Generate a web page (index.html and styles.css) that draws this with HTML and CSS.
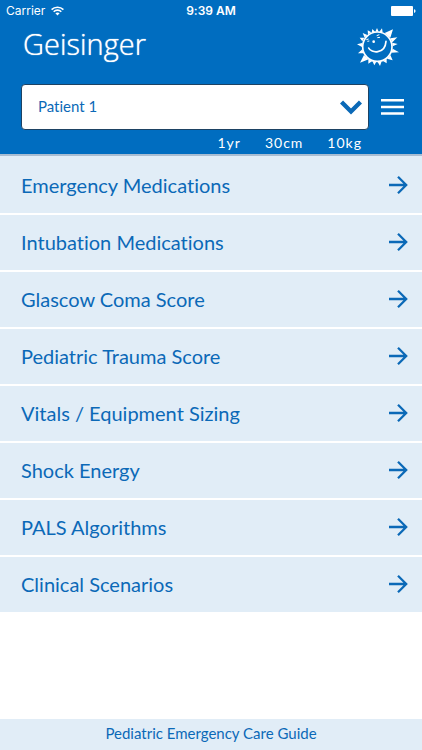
FILE: index.html
```
<!DOCTYPE html>
<html lang="en">
  <head>
    <meta charset="UTF-8" />
    <meta name="viewport" content="width=device-width, initial-scale=1.0" />
    <title>Pediatric Emergency Care Guide</title>
    <link rel="stylesheet" href="styles.css">
  </head>
  <body>
    <header class="header">
      <div class="status">
        <div class="carrier">
          Carrier
          <svg width="13" height="10" viewBox="0 0 13 10" fill="none" stroke="#fff" stroke-width="1.6">
            <path d="M0.6 3.6C3.8 0.4 9.2 0.4 12.4 3.6" />
            <path d="M2.7 5.7C4.8 3.6 8.2 3.6 10.3 5.7" />
            <path d="M4.4 7.3C5.6 6.2 7.4 6.2 8.6 7.3L6.5 9.4Z" fill="#fff" stroke="none" />
          </svg>
        </div>
        <div class="time">9:39 AM</div>
        <div class="battery">
          <svg width="25" height="10" viewBox="0 0 25 10" fill="#fff">
            <rect width="22" height="10" rx="1" />
            <path d="M23 3.2C25 3.2 25 6.8 23 6.8Z" />
          </svg>
        </div>
      </div>
      <div class="brand">
        <div class="logo">Geisinger</div>
        <svg class="sun" width="42" height="38" viewBox="438 83 126 114" fill="#fff">
          <path d="M461 112L455 98L469 104ZM471 102L470 90L481 96ZM482 97L484 86L492 94ZM493 94L498 83L503 94ZM505 94L513 84L515 96ZM521 98L546 87L538 112ZM538 114L559 111L544 126ZM544 127L560 131L545 138ZM545 145L564 156L541 157ZM538 164L545 180L528 175ZM527 176L527 189L516 182ZM512 183L507 197L500 185ZM496 184L490 195L484 182ZM484 182L472 190L472 177ZM473 177L447 187L459 164ZM458 159L441 159L454 147ZM453 140L438 132L453 128ZM454 123L446 112L460 112Z" />
          <ellipse cx="499" cy="139" rx="44" ry="44" fill="none" stroke="#fff" stroke-width="5" />
          <path d="M473 143C480 159 522 163 525 123" fill="none" stroke="#fff" stroke-width="5" stroke-linecap="round" />
          <circle cx="488" cy="124" r="4" />
          <path d="M466 118l7 -2M469 123l6 -1M497 106l8 -3M499 112l8 -1" stroke="#fff" stroke-width="3" />
        </svg>
      </div>
      <div class="picker">
        <div class="field">
          <select class="patient" aria-label="Patient">
            <option>Patient 1</option>
          </select>
          <svg class="chevron" width="22" height="15" viewBox="0 0 22 15" fill="none" stroke="#0b69b7" stroke-width="4.4">
            <path d="M1.5 2L11 11.5L20.5 2" />
          </svg>
        </div>
        <button class="menu" aria-label="Menu">
          <svg width="23" height="16" viewBox="0 0 23 16" fill="#fff">
            <path d="M0 0H23V2.6H0ZM0 6.7H23V9.3H0ZM0 13.2H23V15.8H0Z" />
          </svg>
        </button>
      </div>
      <div class="stats">
        <span>1yr</span>
        <span>30cm</span>
        <span>10kg</span>
      </div>
    </header>
    <nav class="list">
      <a class="item" href="#">Emergency Medications <svg class="arrow" viewBox="0 0 20 20"><path id="arrow" d="M1 10H18M10 1.8L18.2 10L10 18.2" /></svg></a>
      <a class="item" href="#">Intubation Medications <svg class="arrow" viewBox="0 0 20 20"><use href="#arrow" /></svg></a>
      <a class="item" href="#">Glascow Coma Score <svg class="arrow" viewBox="0 0 20 20"><use href="#arrow" /></svg></a>
      <a class="item" href="#">Pediatric Trauma Score <svg class="arrow" viewBox="0 0 20 20"><use href="#arrow" /></svg></a>
      <a class="item" href="#">Vitals / Equipment Sizing <svg class="arrow" viewBox="0 0 20 20"><use href="#arrow" /></svg></a>
      <a class="item" href="#">Shock Energy <svg class="arrow" viewBox="0 0 20 20"><use href="#arrow" /></svg></a>
      <a class="item" href="#">PALS Algorithms <svg class="arrow" viewBox="0 0 20 20"><use href="#arrow" /></svg></a>
      <a class="item" href="#">Clinical Scenarios <svg class="arrow" viewBox="0 0 20 20"><use href="#arrow" /></svg></a>
    </nav>
    <footer class="footer">Pediatric Emergency Care Guide</footer>
  </body>
</html>
```
FILE: styles.css
```
body {
  margin: 0;
  min-height: 100vh;
  display: flex;
  flex-direction: column;
  background-color: #fff;
  color: #0b69b7;
  font-family: Lato, sans-serif;
  font-variant-ligatures: none;
}

.header {
  background-color: #006dc0;
  color: #fff;
  border-bottom: 2px solid #a9bdd2;
}

.status {
  display: grid;
  grid-template-columns: 1fr auto 1fr;
  align-items: center;
  padding: 0 6px;
  font-family: Inter, sans-serif;
  font-size: 12px;
  line-height: 22px;
}

.carrier {
  display: flex;
  align-items: center;
  gap: 6px;
}

.time {
  font-weight: 600;
}

.battery {
  display: flex;
  justify-content: flex-end;
}

.brand {
  display: flex;
  justify-content: space-between;
  align-items: center;
  height: 50px;
  padding: 0 23px;
}

.logo {
  padding-bottom: 6px;
  font-family: "Open Sans", sans-serif;
  font-size: 29px;
  line-height: 44px;
  font-weight: 300;
  text-shadow: 0 0 1px #fff;
}

.picker {
  display: flex;
  align-items: center;
  gap: 12px;
  padding: 12px 18px 0 21px;
}

.field {
  position: relative;
  flex: 1;
}

.patient {
  display: block;
  appearance: none;
  width: 100%;
  height: 46px;
  padding: 0 16px 2px;
  border: 1px solid #1d4263;
  border-radius: 4px;
  background-color: #fff;
  color: #0b69b7;
  font-family: inherit;
  font-size: 15px;
  font-variant-ligatures: none;
}

.chevron {
  position: absolute;
  right: 7px;
  top: 16px;
  pointer-events: none;
}

.menu {
  display: flex;
  padding: 0;
  border: none;
  background: none;
  cursor: pointer;
}

.stats {
  display: flex;
  justify-content: flex-end;
  gap: 24px;
  padding: 3px 60px 1px 0;
  font-size: 14px;
  line-height: 20px;
  letter-spacing: 1px;
}

.list {
  display: flex;
  flex-direction: column;
  gap: 2px;
  border-top: 2px solid #e1edf7;
}

.item {
  box-sizing: border-box;
  display: flex;
  justify-content: space-between;
  align-items: center;
  height: 55px;
  padding: 0 14px 2px 21px;
  background-color: #e1edf7;
  color: inherit;
  font-size: 20px;
  text-decoration: none;
}

.arrow {
  width: 20px;
  height: 20px;
  fill: none;
  stroke: #0b69b7;
  stroke-width: 2.3;
}

.footer {
  margin-top: auto;
  background-color: #e1edf7;
  font-size: 15px;
  line-height: 28px;
  padding-bottom: 3px;
  text-align: center;
}
```
